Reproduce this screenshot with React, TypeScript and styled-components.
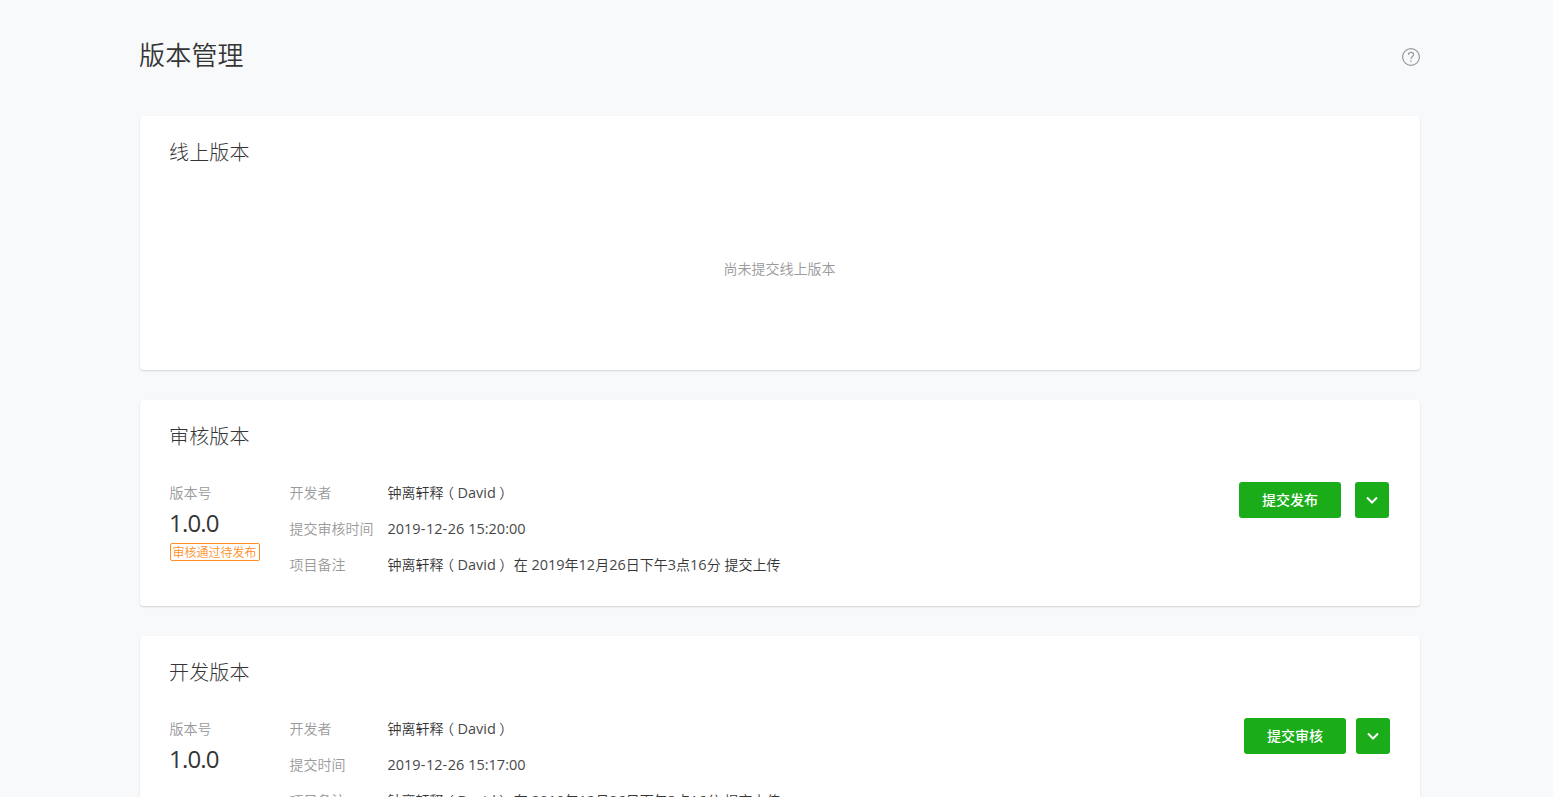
import React from 'react';
import styled, { createGlobalStyle } from 'styled-components';

const GlobalStyle = createGlobalStyle`
  * { box-sizing: border-box; }
  html, body { margin: 0; padding: 0; background: #f7f9fb; }
  body {
    height: 100vh;
    overflow: hidden;
    font-family: "Open Sans", "Noto Sans CJK SC", sans-serif;
    font-size: 14px;
    line-height: 22px;
    color: #353535;
  }
  h1, h2, p, dl, dt, dd { margin: 0; font-weight: 350; }
`;

const Page = styled.main`
  width: 1280px;
  margin-left: 140px;
  height: 100vh;
  overflow: clip;
  overflow-clip-margin: 8px;
`;

const Header = styled.header`
  display: flex;
  justify-content: space-between;
  align-items: center;
  height: 116px;
  padding-bottom: 2px;
`;

const Title = styled.h1`
  font-size: 26px;
  line-height: 40px;
  margin: -7px 0 0 -1px;
  letter-spacing: 0.2px;
  font-family: "Noto Sans CJK SC", sans-serif;
`;

const HelpIcon = styled.svg`
  width: 18px;
  height: 18px;
  display: block;
`;

const Card = styled.section<{ $height: number }>`
  display: flex;
  flex-direction: column;
  height: ${p => p.$height}px;
  margin-bottom: 30px;
  padding: 21px 30px 0;
  background: #fff;
  border-radius: 4px;
  box-shadow: 0 1px 2px rgba(0, 0, 0, 0.15);
`;

const CardTitle = styled.h2`
  font-size: 20px;
  line-height: 30px;
  margin-left: -1px;
  letter-spacing: 0.15px;
  font-weight: 300;
  font-family: "Noto Sans CJK SC", sans-serif;
`;

const Empty = styled.p`
  padding: 91px 1px 0 0;
  text-align: center;
  color: #9a9a9a;
`;

const Body = styled.div`
  display: flex;
  padding-top: 31px;
`;

const Version = styled.div`
  width: 119.5px;
`;

const Label = styled.dt`
  width: 98px;
  color: #9a9a9a;
`;

const VersionLabel = styled.p`
  color: #9a9a9a;
  margin-left: -0.5px;
`;

const Number = styled.p`
  font-size: 24px;
  line-height: 32px;
  margin: 3px 0 0 -1px;
  letter-spacing: -0.8px;
  font-weight: 400;
`;

const Tag = styled.p`
  display: flex;
  align-items: center;
  justify-content: center;
  width: 90px;
  height: 18px;
  margin-top: 4px;
  padding: 1px 1px 0 0;
  border: 1px solid #ff8f1f;
  border-radius: 2px;
  color: #ff8f1f;
  font-size: 12px;
  line-height: 16px;
  white-space: nowrap;
`;

const Details = styled.dl`
  flex: 1;
`;

const Row = styled.div`
  display: flex;
  height: 36px;
`;

const Value = styled.dd`
  white-space: pre;
`;

const Latin = styled.span`
  font-weight: 400;
  font-size: 14.5px;
  line-height: 1;
  color: #484848;
`;

const Paren = styled.span`
  display: inline-block;
  width: 14px;
  line-height: 14px;
  text-align: center;
  font-family: "Noto Sans CJK SC", sans-serif;
  font-feature-settings: "halt";
`;

const Dash = styled.span`
  letter-spacing: 0.6px;
`;

const Actions = styled.div<{ $gap: number; $shift: number }>`
  display: flex;
  gap: ${p => p.$gap}px;
  margin-right: ${p => p.$shift}px;
`;

const Button = styled.button<{ $width: number }>`
  display: flex;
  align-items: center;
  justify-content: center;
  width: ${p => p.$width}px;
  height: 36px;
  padding: 0 0 1px;
  border: 0;
  border-radius: 3px;
  background: #1aad19;
  color: #fff;
  font: 500 14px/21px "Noto Sans CJK SC", sans-serif;
`;

/* Sets Latin runs, dashes and full-width parentheses apart from the Chinese text. */
const Mixed = ({ text }: { text: string }) => (
  <>
    {text.split(/([（）]|-|[A-Za-z0-9: ]+)/).filter(Boolean).map((part, i) => {
      if (/[（）]/.test(part)) return <Paren key={i}>{part}</Paren>;
      if (part === '-') return <Latin key={i}><Dash>-</Dash></Latin>;
      if (/[A-Za-z0-9: ]/.test(part)) return <Latin key={i}>{part}</Latin>;
      return part;
    })}
  </>
);

const Chevron = () => (
  <svg width="12" height="8" viewBox="0 0 12 8" fill="none" stroke="#fff" strokeWidth="2">
    <path d="M1 1.5 L6 6.5 L11 1.5" />
  </svg>
);

type VersionCardProps = {
  title: string;
  tag?: string;
  timeLabel: string;
  time: string;
  action: string;
  gap: number;
  shift: number;
};

const developer = '钟离轩释（David）';

const VersionCard = ({ title, tag, timeLabel, time, action, gap, shift }: VersionCardProps) => (
  <Card $height={206}>
    <CardTitle>{title}</CardTitle>
    <Body>
      <Version>
        <VersionLabel>版本号</VersionLabel>
        <Number>1.0.0</Number>
        {tag && <Tag>{tag}</Tag>}
      </Version>
      <Details>
        <Row><Label>开发者</Label><Value><Mixed text={developer} /></Value></Row>
        <Row><Label>{timeLabel}</Label><Value><Mixed text={time} /></Value></Row>
        <Row><Label>项目备注</Label><Value><Mixed text={`${developer} 在 2019年12月26日下午3点16分 提交上传`} /></Value></Row>
      </Details>
      <Actions $gap={gap} $shift={shift}>
        <Button $width={102}>{action}</Button>
        <Button $width={34} aria-label="更多"><Chevron /></Button>
      </Actions>
    </Body>
  </Card>
);

export default function App() {
  return (
    <>
      <GlobalStyle />
      <Page lang="zh-CN">
        <Header>
          <Title>版本管理</Title>
          <HelpIcon viewBox="0 0 18 18" fill="none" stroke="#9a9a9a">
            <circle cx="9" cy="9" r="8.4" strokeWidth="1.2" />
            <path d="M6.4 6.9 C6.4 5.2 7.5 4.4 9 4.4 C10.5 4.4 11.6 5.2 11.6 6.6 C11.6 8.5 9 8.7 9 11" strokeWidth="1.2" />
            <path d="M9 12.3 V13.8" strokeWidth="1.3" />
          </HelpIcon>
        </Header>
        <Card $height={254}>
          <CardTitle>线上版本</CardTitle>
          <Empty>尚未提交线上版本</Empty>
        </Card>
        <VersionCard title="审核版本" tag="审核通过待发布" timeLabel="提交审核时间" time="2019-12-26 15:20:00" action="提交发布" gap={14} shift={1} />
        <VersionCard title="开发版本" timeLabel="提交时间" time="2019-12-26 15:17:00" action="提交审核" gap={10} shift={0} />
      </Page>
    </>
  );
}
